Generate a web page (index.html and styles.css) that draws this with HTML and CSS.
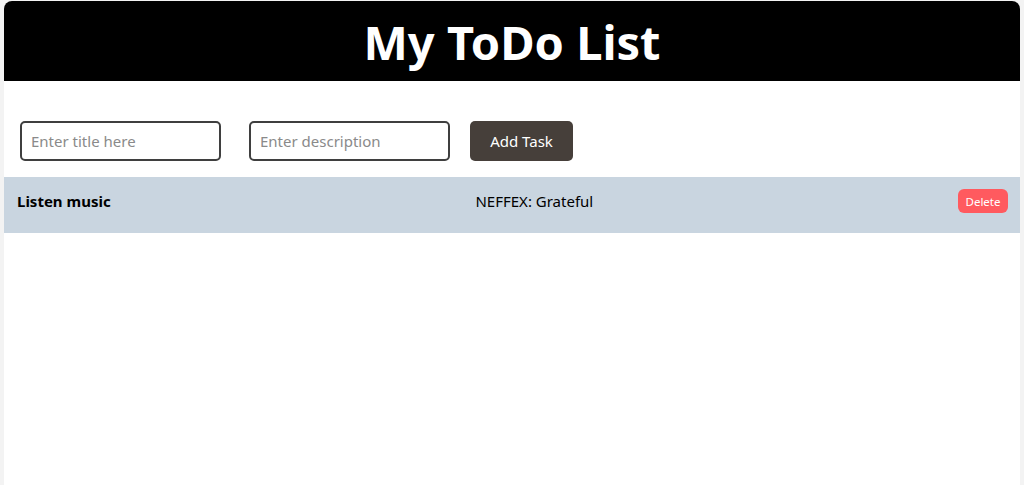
FILE: index.html
```html
<!DOCTYPE html>
<html lang="en">
<head>
<meta charset="utf-8">
<title>My ToDo List</title>
<link rel="stylesheet" href="styles.css">
</head>
<body>
<div class="card">
  <header class="header">
    <h1 class="title">My ToDo List</h1>
  </header>
  <form class="form">
    <input class="field" type="text" placeholder="Enter title here">
    <input class="field field-desc" type="text" placeholder="Enter description">
    <button class="add-btn" type="button">Add Task</button>
  </form>
  <ul class="list">
    <li class="item">
      <span class="item-title">Listen music</span>
      <span class="item-desc">NEFFEX: Grateful</span>
      <button class="delete-btn" type="button">Delete</button>
    </li>
  </ul>
</div>
</body>
</html>
```

FILE: styles.css
```css
* { box-sizing: border-box; }
html, body { height: 100%; }
body {
  margin: 0;
  background: #f3f3f3;
  font-family: "Noto Sans", "Open Sans", sans-serif;
  overflow: hidden;
}
.card {
  margin: 1px 4px 0;
  min-height: calc(100% - 1px);
  background: #fff;
  border-radius: 8px 8px 0 0;
  overflow: hidden;
}
.header {
  height: 80px;
  background: #000;
  display: flex;
  align-items: center;
  justify-content: center;
}
.title {
  margin: 0;
  padding-top: 2px;
  color: #fff;
  font-size: 47px;
  font-weight: 700;
  line-height: 1;
}
.form {
  display: flex;
  align-items: center;
  padding: 40px 16px 16px;
}
.field {
  width: 201px;
  height: 40px;
  border: 2px solid #3f3f3f;
  border-radius: 5px;
  padding: 0 9px;
  font-family: inherit;
  font-size: 15px;
  color: #222;
  background: #fff;
}
.field::placeholder { color: #8a8a8a; }
.field-desc { margin-left: 28px; }
.add-btn {
  margin-left: 20px;
  width: 103px;
  height: 40px;
  border: 0;
  border-radius: 5px;
  background: #463f3a;
  color: #fff;
  font-family: inherit;
  font-size: 15px;
}
.list {
  list-style: none;
  margin: 0;
  padding: 0;
}
.item {
  height: 56px;
  display: flex;
  align-items: center;
  justify-content: space-between;
  padding: 0 12px 8px 13px;
  background: #c9d5e0;
  font-size: 15px;
  color: #000;
}
.item-title { font-weight: 700; }
.delete-btn {
  width: 50px;
  height: 24px;
  border: 0;
  border-radius: 6px;
  background: #ff5a5f;
  color: #fff;
  font-family: inherit;
  font-size: 11.5px;
  padding: 0;
}
```
